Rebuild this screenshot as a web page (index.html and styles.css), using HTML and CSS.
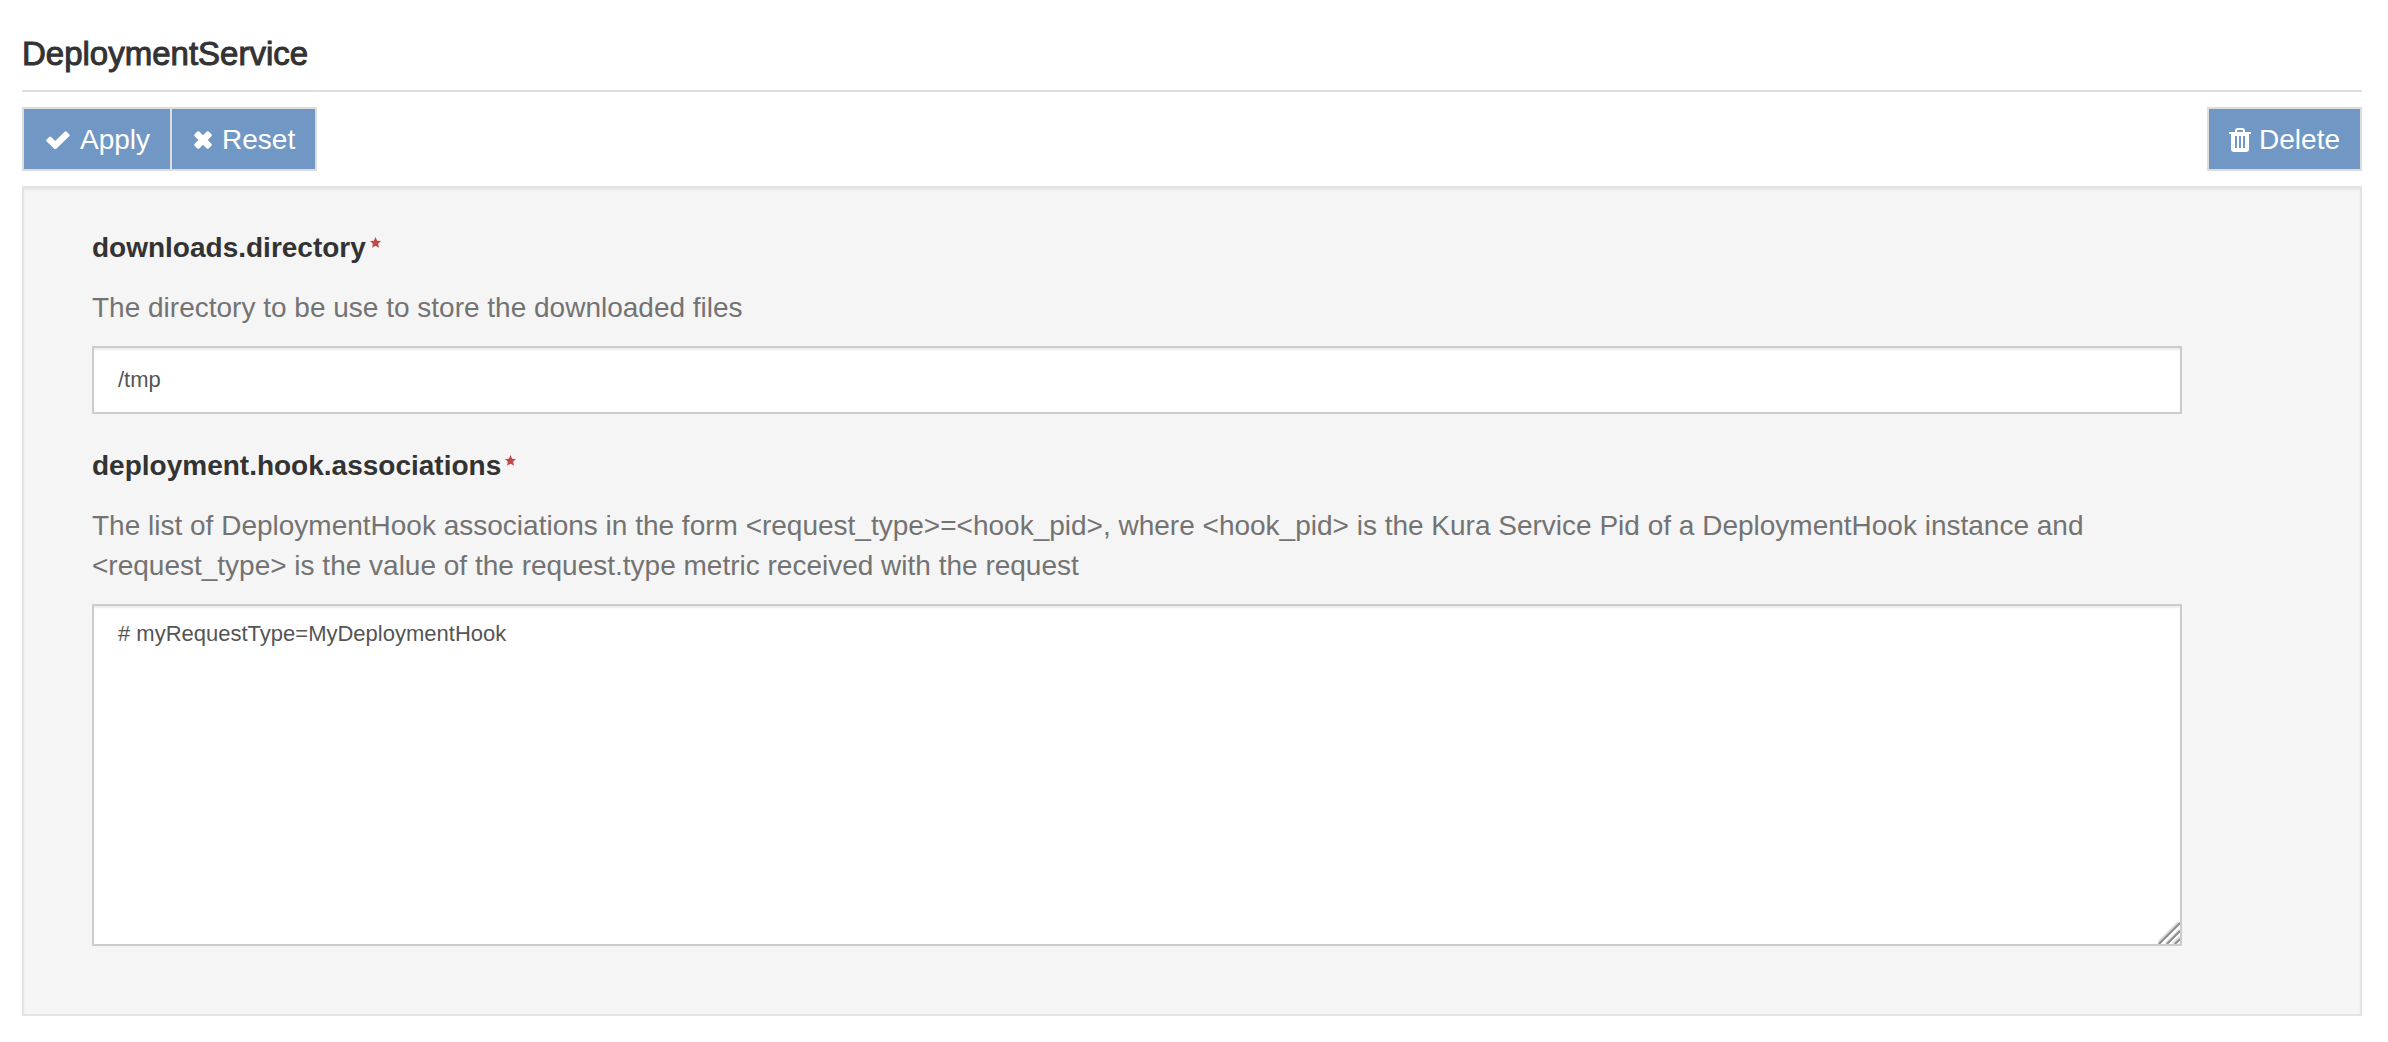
FILE: index.html
```html
<!DOCTYPE html>
<html lang="en">
<head>
<meta charset="utf-8">
<meta name="viewport" content="width=device-width, initial-scale=1">
<title>DeploymentService</title>
<link rel="stylesheet" href="styles.css">
</head>
<body>
<main class="page">
  <h1 class="page-title">DeploymentService</h1>
  <div class="toolbar">
    <div class="button-group">
      <button class="button" type="submit" form="service-form">
        <svg class="icon icon-wide" viewBox="-2 0 28 18" aria-hidden="true"><path d="M.700 10.500 Q-.300 9.500 .700 8.500 L3.200 6 Q4.200 5 5.200 6 L9.200 10 L18.600 .700 Q19.700 -.300 20.700 .700 L23.200 3.200 Q24.200 4.200 23.200 5.200 L10.300 17.800 Q9.200 18.800 8.200 17.800 Z"/></svg>
        Apply
      </button>
      <button class="button" type="reset" form="service-form">
        <svg class="icon icon-close" viewBox="-2 0 22 18" aria-hidden="true"><path d="M3.300 .600 Q4.300 -.300 5.300 .600 L9 4.300 L12.700 .600 Q13.700 -.300 14.700 .600 L17.400 3.300 Q18.300 4.300 17.400 5.300 L13.700 9 L17.400 12.700 Q18.300 13.700 17.400 14.700 L14.700 17.400 Q13.700 18.300 12.700 17.400 L9 13.700 L5.300 17.400 Q4.300 18.300 3.300 17.400 L.600 14.700 Q-.300 13.700 .600 12.700 L4.300 9 L.600 5.300 Q-.300 4.300 .600 3.300 Z"/></svg>
        Reset
      </button>
    </div>
    <button class="button" type="button">
      <svg class="icon icon-trash" viewBox="0 0 22 24" aria-hidden="true"><path fill-rule="evenodd" d="M0 4 H6 V3 Q6 0 9 0 H13 Q16 0 16 3 V4 H22 V6 H20 V21 Q20 24 17 24 H5 Q2 24 2 21 V6 H0 Z M8 4 H14 V3 Q14 2 13 2 H9 Q8 2 8 3 Z M6 8 V20 H8 V8 Z M10 8 V20 H12 V8 Z M14 8 V20 H16 V8 Z"/></svg>
      Delete
    </button>
  </div>
  <form class="panel" id="service-form">
    <div class="field">
      <label class="field-label" for="downloads-directory">downloads.directory<svg class="required" viewBox="0 0 22 22" aria-hidden="true"><path d="M11 0 L14.300 7.300 L22 8.200 L16.300 13.600 L17.800 21.500 L11 17.600 L4.200 21.500 L5.700 13.600 L0 8.200 L7.700 7.300 Z"/></svg></label>
      <p class="field-help" id="downloads-help">The directory to be use to store the downloaded files</p>
      <input class="control" id="downloads-directory" type="text" value="/tmp" aria-describedby="downloads-help" required>
    </div>
    <div class="field">
      <label class="field-label" for="hook-associations">deployment.hook.associations<svg class="required" viewBox="0 0 22 22" aria-hidden="true"><path d="M11 0 L14.300 7.300 L22 8.200 L16.300 13.600 L17.800 21.500 L11 17.600 L4.200 21.500 L5.700 13.600 L0 8.200 L7.700 7.300 Z"/></svg></label>
      <p class="field-help" id="hook-help">The list of DeploymentHook associations in the form &lt;request_type&gt;=&lt;hook_pid&gt;, where &lt;hook_pid&gt; is the Kura Service Pid of a DeploymentHook instance and &lt;request_type&gt; is the value of the request.type metric received with the request</p>
      <div class="area-wrap">
        <textarea class="control control-area" id="hook-associations" aria-describedby="hook-help" spellcheck="false" required># myRequestType=MyDeploymentHook</textarea>
        <svg class="grip" viewBox="0 0 22 22" aria-hidden="true"><path class="grip-shade" d="M-1 22 L22 -1 M8 22 L22 8 M15 22 L22 15"/><path class="grip-line" d="M1 22 L22 1 M9 22 L22 9 M17 22 L22 17"/></svg>
      </div>
    </div>
  </form>
</main>
</body>
</html>
```

FILE: styles.css
```css
* {
  box-sizing: border-box;
}

body {
  margin: 0;
  background: #fff;
  color: #333;
  font-family: "Liberation Sans", Arial, sans-serif;
  font-size: 28px;
  line-height: 40px;
}

.page {
  padding: 34px 26px 26px 22px;
}

.page-title {
  margin: 0;
  padding-bottom: 16px;
  border-bottom: 2px solid #ddd;
  font-size: 33px;
  font-weight: 400;
  line-height: 40px;
  -webkit-text-stroke: 1px #333;
}

.toolbar {
  display: flex;
  justify-content: space-between;
  padding: 15px 0;
}

.button-group {
  display: flex;
}

.button {
  display: flex;
  align-items: center;
  gap: 8px;
  height: 64px;
  padding: 2px 20px 0;
  border: 2px solid #ddd;
  background: #7197c5;
  color: #fff;
  font: inherit;
  cursor: pointer;
}

.button-group .button + .button {
  margin-left: -2px;
}

.icon {
  flex: none;
  fill: #fff;
}

.icon-wide {
  width: 28px;
  height: 18px;
}

.icon-close {
  width: 22px;
  height: 18px;
}

.icon-trash {
  width: 22px;
  height: 24px;
}

.panel {
  padding: 40px 178px 68px 68px;
  border: 2px solid #e3e3e3;
  background: #f5f5f5;
  box-shadow: inset 0 2px 2px rgba(0, 0, 0, 0.05);
}

.field + .field {
  margin-top: 32px;
}

.field-label {
  display: flex;
  align-items: flex-start;
  gap: 4px;
  font-weight: 700;
}

.required {
  width: 11px;
  height: 11px;
  margin-top: 9px;
  fill: #c04848;
}

.field-help {
  margin: 20px 0 18px;
  color: #737373;
}

.control {
  display: block;
  width: 100%;
  height: 68px;
  padding: 12px 24px;
  border: 2px solid #ccc;
  border-radius: 0;
  background: #fff;
  box-shadow: inset 0 2px 2px rgba(0, 0, 0, 0.075);
  color: #555;
  font: inherit;
  font-size: 22px;
  outline: none;
}

.area-wrap {
  position: relative;
}

.control-area {
  height: 342px;
  line-height: 32px;
  resize: none;
}

.grip {
  position: absolute;
  right: 2px;
  bottom: 2px;
  width: 22px;
  height: 22px;
  fill: none;
  pointer-events: none;
}

.grip-shade {
  stroke: #ddd;
  stroke-width: 3px;
}

.grip-line {
  stroke: #8c8c8c;
  stroke-width: 2px;
}
```
